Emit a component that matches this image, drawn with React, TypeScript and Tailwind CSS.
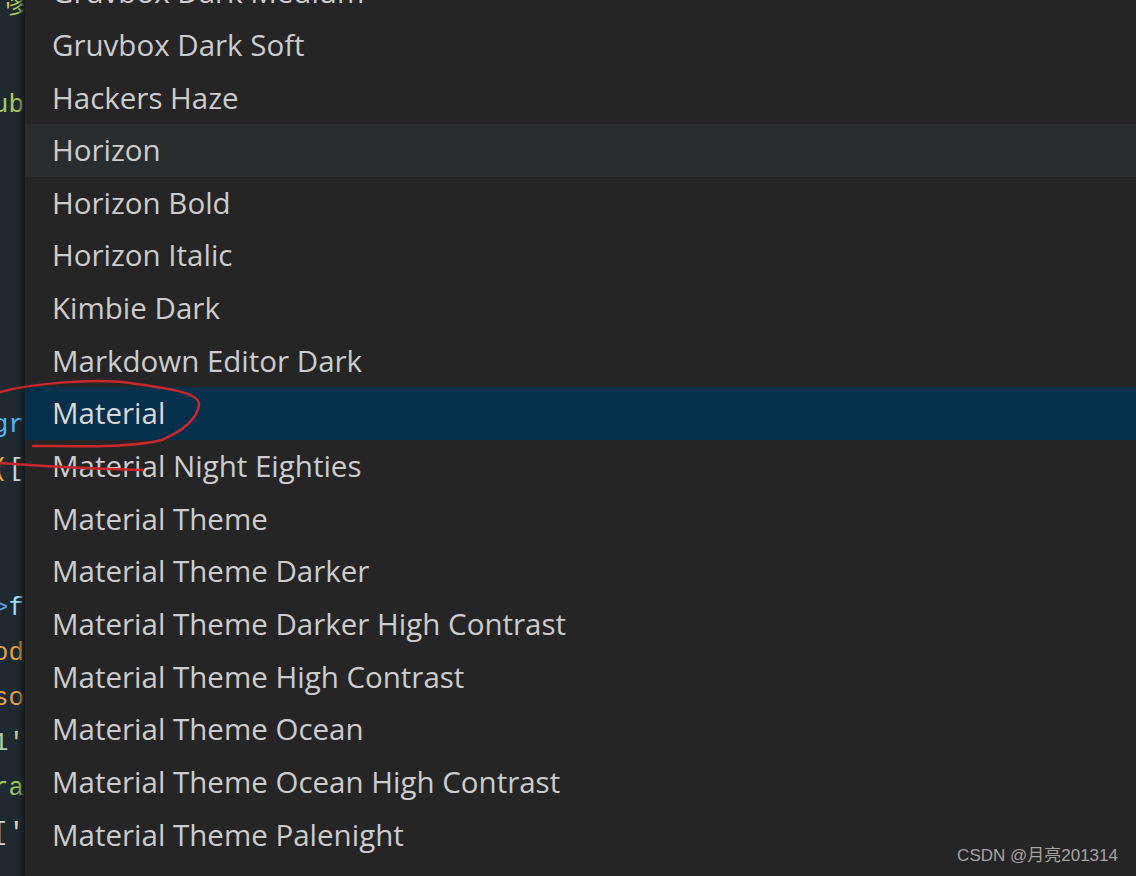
import React from "react";

const themes = [
	"Gruvbox Dark Medium",
	"Gruvbox Dark Soft",
	"Hackers Haze",
	"Horizon",
	"Horizon Bold",
	"Horizon Italic",
	"Kimbie Dark",
	"Markdown Editor Dark",
	"Material",
	"Material Night Eighties",
	"Material Theme",
	"Material Theme Darker",
	"Material Theme Darker High Contrast",
	"Material Theme High Contrast",
	"Material Theme Ocean",
	"Material Theme Ocean High Contrast",
	"Material Theme Palenight",
];

// editor lines peeking out from under the picker (only the tail shows)
const codeLines: { top: number; text: React.ReactNode }[] = [
	{ top: 84, text: <span className="text-[#a9c860]">pub</span> },
	{ top: 404, text: <span className="text-[#4fb6f0]">bg.gr</span> },
	{ top: 448, text: <><span className="text-[#e0b040]">(</span><span className="text-[#d4d4d4]">[</span></> },
	{ top: 587, text: <><span className="text-[#569cd6]">&gt;</span><span className="text-[#9cdcfe]">f</span></> },
	{ top: 632, text: <span className="text-[#e2a04a]">od</span> },
	{ top: 677, text: <span className="text-[#e2a04a]">so</span> },
	{ top: 722, text: <span className="text-[#b5cea8]">1'</span> },
	{ top: 767, text: <span className="text-[#9fc95a]">ra</span> },
	{ top: 812, text: <span className="text-[#d4d4d4]">['</span> },
];

export default function App() {
	return (
		<div className="relative w-[1136px] h-[876px] overflow-hidden flex bg-[#252526]">
			<div className="relative w-[25px] shrink-0 h-full bg-[#1f2a30] overflow-hidden">
				<span className="absolute left-[2px] top-[2px] text-[#e0c050] text-[20px] leading-none font-['Liberation_Mono',monospace]">'</span>
				<span className="absolute left-[8px] -top-[6px] text-[#a9c860] text-[22px] leading-none font-['Noto_Sans_CJK_SC',sans-serif] [writing-mode:vertical-rl]">多</span>
				{codeLines.map((l) => (
					<div
						key={l.top}
						className="absolute right-[1px] h-[40px] flex justify-end items-center whitespace-nowrap text-[26px] font-['Liberation_Mono',monospace]"
						style={{ top: l.top + 1 }}
					>
						{l.text}
					</div>
				))}
				<div className="absolute right-0 top-0 h-full w-[7px] bg-gradient-to-r from-transparent to-[#141a1e]" />
			</div>
			<div className="flex-1 flex flex-col -mt-[34px] font-['Open_Sans',sans-serif] text-[29.5px] text-[#cccccc]">
				{themes.map((t) => (
					<div
						key={t}
						className={
							"h-[52.67px] shrink-0 flex items-center pl-[27px] " +
							(t === "Horizon" ? "bg-[#2a2d2e]" : t === "Material" ? "bg-[#04304b] text-[#d8d8d8]" : "")
						}
					>
						{t}
					</div>
				))}
			</div>
			<svg className="absolute left-0 top-0 pointer-events-none" width="260" height="500" viewBox="0 0 260 500">
				<path
					d="M0 392 C 30 384, 90 378, 130 383 C 165 388, 200 392, 199 405 C 197 420, 180 432, 162 440 C 130 448, 80 446, 33 446"
					fill="none"
					stroke="#c8282c"
					strokeWidth="2.5"
					strokeLinecap="round"
				/>
				<path d="M0 463 C 40 466, 90 469, 143 470" fill="none" stroke="#c8282c" strokeWidth="2.5" strokeLinecap="round" />
			</svg>
			<div className="absolute right-[18px] bottom-[8px] text-[17px] text-[#a3a3a3] font-['Liberation_Sans','Noto_Sans_CJK_SC',sans-serif]">
				CSDN @月亮201314
			</div>
		</div>
	);
}
